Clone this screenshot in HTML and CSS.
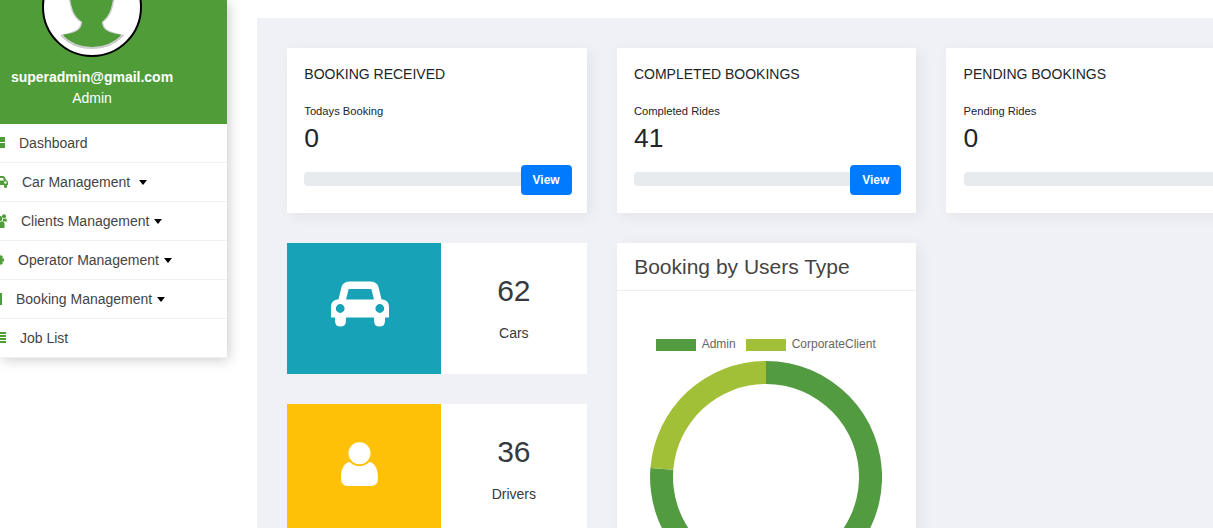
FILE: index.html
```html
<!DOCTYPE html>
<html lang="en">
<head>
<meta charset="utf-8">
<title>Admin Dashboard</title>
<link rel="stylesheet" href="styles.css">
</head>
<body>
<div class="page">
  <aside class="sidebar">
    <div class="profile">
      <svg class="avatar" width="100" height="100" viewBox="0 0 100 100">
        <circle cx="50" cy="50" r="49" fill="#fff" stroke="#000" stroke-width="2"/>
        <path d="M27 38C29 54 32 60 39.500 65C39 74 31 76 19.500 78.500C36 96 65 95 81 78.500C69 76 61 74 60.500 65C67 60 70 54 72 40" fill="#4f9c39" stroke="#ccc" stroke-width="1.500"/>
        <path d="M20 79C36 95 64 95 80 79" fill="none" stroke="#ccc" stroke-width="2"/>
        <path d="M28 38C30 54 33 60 40.500 65C40 74 33 76 21 77.500C37 93 63 93 79 77.500C68 76 60 74 59.500 65C66 60 69 54 71 40Z" fill="#4f9c39"/>
      </svg>
      <div class="email">superadmin@gmail.com</div>
      <div class="role">Admin</div>
    </div>
    <nav class="menu">
      <a class="item dashboard"><svg class="icon" width="12" height="12" viewBox="0 0 12 12"><path d="M0 0H5.500V5H0ZM6.500 0H12V5H6.500ZM0 6H5.500V11H0ZM6.500 6H12V11H6.500Z"/></svg><span>Dashboard</span></a>
      <a class="item car"><svg class="icon" width="16" height="14" viewBox="0 0 16 14"><path fill-rule="evenodd" d="M4.500 1H11Q12.500 1 13 2.500L14 5Q16 5.500 16 7.500V10H15V11.500Q15 13 13.500 13T12 11.500V10H4V11.500Q4 13 2.500 13T1 11.500V10H0V7.500Q0 5.500 2 5L3 2.500Q3.500 1 4.500 1ZM5 3L4 5.500H12L11 3ZM12.200 7.500a1.200 1.200 0 1 0 2.400 0a1.200 1.200 0 1 0-2.400 0Z"/></svg><span>Car Management</span><i class="caret"></i></a>
      <a class="item clients"><svg class="icon" width="15" height="14" viewBox="0 0 15 14"><circle cx="7.500" cy="4.500" r="2.800"/><circle cx="12" cy="2.200" r="2"/><circle cx="3" cy="2.200" r="2"/><path d="M3 14V10Q3 7.500 5.500 7.200Q7.500 9 9.500 7.200Q12.500 7.500 12.500 10V14ZM11.200 4.800Q12.500 5 13.500 4.300Q15 4.500 15 7.500H11.500Q10 6.500 11.200 4.800Z"/></svg><span>Clients Management</span><i class="caret"></i></a>
      <a class="item operator"><svg class="icon" width="12" height="12" viewBox="0 0 12 12"><path d="M4.500 0H7.500V2L9 1L11 3L10 4.500H12V7.500H10L11 9L9 11L7.500 10V12H4.500V10L3 11L1 9L2 7.500H0V4.500H2L1 3L3 1L4.500 2Z"/></svg><span>Operator Management</span><i class="caret"></i></a>
      <a class="item booking"><svg class="icon" width="12" height="12" viewBox="0 0 12 12"><path d="M0 0H12V12H0Z"/></svg><span>Booking Management</span><i class="caret"></i></a>
      <a class="item jobs"><svg class="icon" width="14" height="12" viewBox="0 0 14 12"><path d="M0 0H14V2H0ZM0 3H14V5H0ZM0 6H14V8H0ZM0 9H14V11H0Z"/></svg><span>Job List</span></a>
    </nav>
  </aside>
  <main class="main">
    <section class="card booking-card">
      <h2>BOOKING RECEIVED</h2>
      <p class="label">Todays Booking</p>
      <p class="count">0</p>
      <div class="progress-row"><div class="bar"></div><a class="view">View</a></div>
    </section>
    <section class="card booking-card">
      <h2>COMPLETED BOOKINGS</h2>
      <p class="label">Completed Rides</p>
      <p class="count">41</p>
      <div class="progress-row"><div class="bar"></div><a class="view">View</a></div>
    </section>
    <section class="card booking-card">
      <h2>PENDING BOOKINGS</h2>
      <p class="label">Pending Rides</p>
      <p class="count">0</p>
      <div class="progress-row"><div class="bar"></div></div>
    </section>
    <div class="stats">
      <section class="stat">
        <div class="stat-icon cars">
          <svg width="58" height="46" viewBox="0 0 58 46" fill="#fff"><path fill-rule="evenodd" d="M19 .5H39Q46 .5 47.500 6L50.500 18.300Q58 19 58 26V36.500H54V40Q54 45.500 48.500 45.500T43 40V36.500H15V40Q15 45.500 9.500 45.500T4 40V36.500H0V26Q0 19 7.500 18.300L10.500 6Q12 .5 19 .5ZM17.700 8L15 18.500H43L40.300 8ZM4.800 27.500a4.400 4.400 0 1 0 8.800 0a4.400 4.400 0 1 0-8.800 0ZM44.400 27.500a4.400 4.400 0 1 0 8.800 0a4.400 4.400 0 1 0-8.800 0Z"/></svg>
        </div>
        <div class="stat-text"><strong>62</strong><span>Cars</span></div>
      </section>
      <section class="stat">
        <div class="stat-icon drivers">
          <svg width="37" height="44" viewBox="0 0 37 44" fill="#fff"><path d="M8.500 20Q13 24 18.500 24T28.500 20C34 21 37 27 37 36Q37 44 30 44H7Q0 44 0 36C0 27 3 21 8.500 20Z"/><circle cx="18.500" cy="11.300" r="11.800" stroke="#ffc107" stroke-width="1.500"/></svg>
        </div>
        <div class="stat-text"><strong>36</strong><span>Drivers</span></div>
      </section>
    </div>
    <section class="card chart-card">
      <h3>Booking by Users Type</h3>
      <div class="legend">
        <i class="swatch admin"></i><span>Admin</span>
        <i class="swatch corporate"></i><span>CorporateClient</span>
      </div>
      <svg class="donut" width="232" height="232" viewBox="0 0 232 232">
        <path d="M116 0A116 116 0 1 1 .4 107L23.300 108.800A93 93 0 1 0 116 23Z" fill="#529b41"/>
        <path d="M116 0A116 116 0 0 0 .4 107L23.300 108.800A93 93 0 0 1 116 23Z" fill="#a2c037"/>
      </svg>
    </section>
  </main>
</div>
</body>
</html>
```

FILE: styles.css
```css
* { box-sizing: border-box; }
body { margin: 0; background: #fff; font-family: "Liberation Sans", Arial, sans-serif; font-size: 14px; color: #212529; }
h2, h3, p { margin: 0; font-weight: 400; }
.page { display: flex; align-items: flex-start; gap: 30px; width: 1213px; height: 528px; overflow: hidden; }

.sidebar { flex: 0 0 227px; height: 358px; background: #fff; box-shadow: 2px 2px 12px rgba(0, 0, 0, .2); }
.profile { height: 124px; padding-right: 43px; background: #4f9c39; color: #fff; display: flex; flex-direction: column; align-items: center; }
.avatar { flex: none; margin-top: -43px; }
.email { margin-top: 9px; line-height: 22px; font-weight: 700; }
.role { line-height: 20px; }
.item { display: flex; align-items: center; height: 39px; border-bottom: 1px solid #f1f1f1; color: #444; white-space: nowrap; }
.icon { flex: none; fill: #4f9c39; }
.dashboard .icon { margin: 0 14px 0 -7px; }
.car .icon { margin: 0 14px 0 -8px; }
.clients .icon { margin: 0 14px 0 -8px; }
.operator .icon { margin: 0 14px 0 -8px; }
.booking .icon { margin: 0 14px 0 -10px; }
.jobs .icon { margin: 0 14px 0 -8px; }
.caret { margin-left: 5px; border: 4.500px solid transparent; border-top: 5px solid #000; border-bottom: 0; }
.car .caret { margin-left: 9px; }

.main { flex: none; display: grid; grid-template-columns: repeat(3, 299.67px); gap: 30px; align-items: start; margin-top: 18px; padding: 30px; background: #f0f1f7; }
.card { background: #fff; box-shadow: 4px 3px 14px rgba(0, 0, 0, .06); }
.booking-card { height: 165px; padding: 17px 15px 0 17.300px; }
.booking-card h2 { font-size: 14px; line-height: 18px; }
.label { margin-top: 21px; font-size: 11.200px; line-height: 14px; }
.count { font-size: 26.500px; line-height: 40px; }
.progress-row { display: flex; align-items: center; margin-top: 7px; height: 30px; }
.bar { flex: 1; height: 14px; margin-top: -2px; background: #e7ebee; border-radius: 4px 0 0 4px; }
.view { width: 51px; height: 30px; border-radius: 4px; background: #007bff; color: #fff; font-size: 12px; font-weight: 700; line-height: 30px; text-align: center; }

.stats { display: grid; gap: 30px; }
.stat { display: flex; height: 131px; background: #fff; }
.stat-icon { width: 154px; display: flex; justify-content: center; padding-top: 38px; }
.cars { background: #18a2b8; padding-right: 8px; }
.drivers { background: #ffc107; padding-right: 9px; }
.stat-text { flex: 1; display: flex; flex-direction: column; align-items: center; padding-top: 30px; color: #343a40; }
.stat-text strong { font-size: 30px; font-weight: 400; line-height: 36px; }
.stat-text span { margin-top: 15px; line-height: 18px; }

.chart-card { display: flex; flex-direction: column; height: 400px; }
.chart-card h3 { height: 48px; padding-left: 17.500px; border-bottom: 1px solid #eee; color: #444; font-size: 21px; line-height: 48px; }
.legend { display: flex; align-items: center; height: 14px; margin: 46px 0 0 39px; color: #666; font-size: 12px; line-height: 14px; }
.swatch { width: 40px; height: 12px; margin: 1px 6px 0 0; }
.legend span + .swatch { margin-left: 10px; }
.legend .admin { background: #529b41; }
.legend .corporate { background: #a2c037; }
.donut { margin: 10px 0 0 33px; }
```
